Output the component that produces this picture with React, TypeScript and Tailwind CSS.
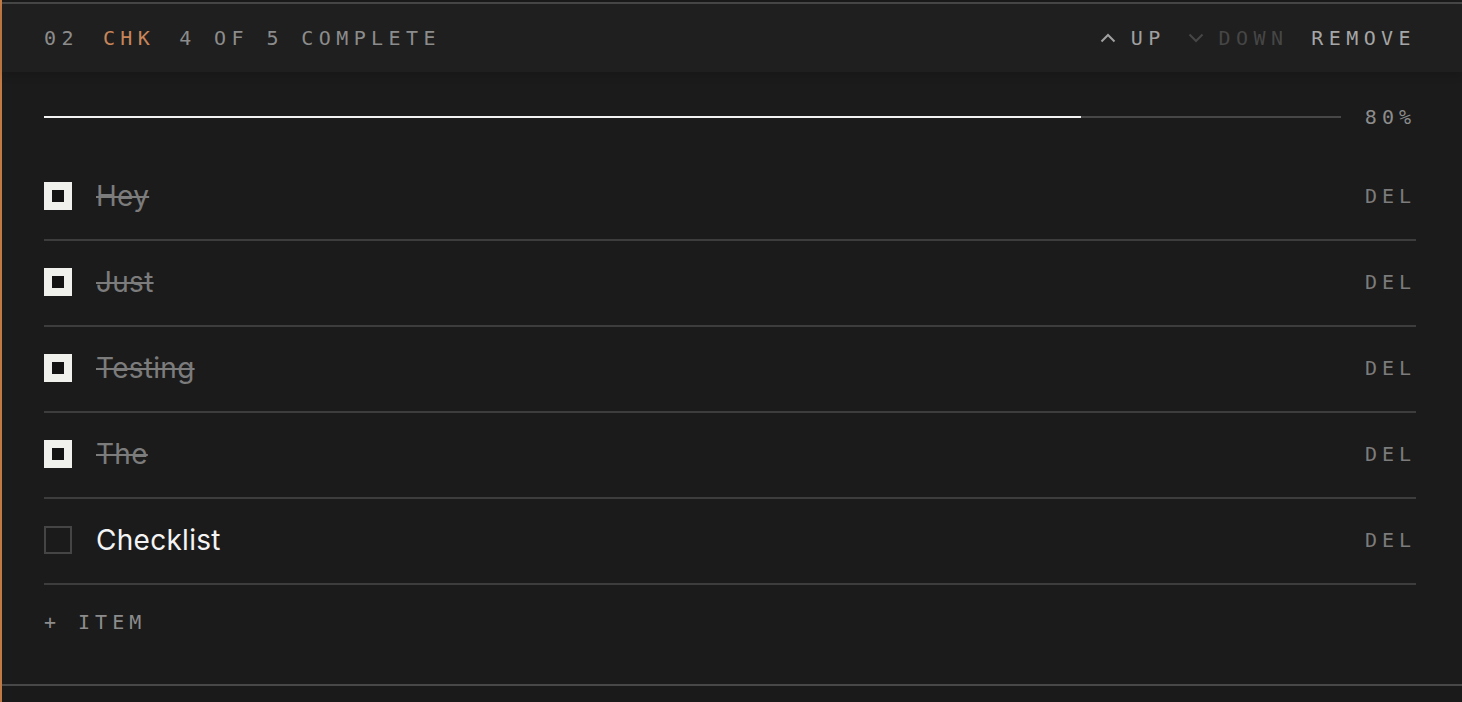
import { useState } from 'react'

type Item = { id: number; text: string; done: boolean }

const initial: Item[] = [
  { id: 1, text: 'Hey', done: true },
  { id: 2, text: 'Just', done: true },
  { id: 3, text: 'Testing', done: true },
  { id: 4, text: 'The', done: true },
  { id: 5, text: 'Checklist', done: false },
]

const mono = "font-['DejaVu_Sans_Mono','Liberation_Mono',monospace]"

function Chevron({ up }: { up?: boolean }) {
  return (
    <svg width="16" height="10" viewBox="0 0 16 10" fill="none" className="mr-[15px]">
      <polyline
        points={up ? '1.5,8.5 8,2 14.5,8.5' : '1.5,1.5 8,8 14.5,1.5'}
        stroke="currentColor"
        strokeWidth="2"
      />
    </svg>
  )
}

export default function App() {
  const [items, setItems] = useState(initial)
  const done = items.filter((i) => i.done).length
  const pct = Math.round((done / items.length) * 100)

  return (
    <div className="min-h-screen border-l-2 border-[#c27a45] bg-[#1a1a1a] pt-[2px]">
      <section className="border-t-2 border-b-2 border-t-[#474747] border-b-[#484848] bg-[#1b1b1b]">
        {/* header */}
        <div className={`flex h-[68px] items-center justify-between bg-[#1f1f1f] pl-[42px] pr-[46px] text-[20px] uppercase tracking-[0.27em] shadow-[0_4px_8px_rgba(0,0,0,0.12)] ${mono}`}>
          <div className="flex items-center gap-[24px] text-[#8c8c8c]">
            <span>02</span>
            <span className="text-[#c8855a]">CHK</span>
            <span>
              {done} of {items.length} complete
            </span>
          </div>
          <div className="flex items-center">
            <button className="flex items-center text-[#a0a0a0]">
              <Chevron up />
              UP
            </button>
            <button className="ml-[22px] flex items-center text-[#464646]">
              <Chevron />
              DOWN
            </button>
            <button className="ml-[23px] text-[#a6a6a6]">REMOVE</button>
          </div>
        </div>

        <div className="pl-[42px] pr-[46px]">
          {/* progress */}
          <div className="mt-[35px] flex h-[20px] items-center gap-[24px]">
            <div className="relative h-[2px] flex-1 bg-[#474747]">
              <div className="absolute inset-y-0 left-0 bg-[#f2f2f2]" style={{ width: `${pct}%` }} />
            </div>
            <span className={`text-[20px] tracking-[0.25em] text-[#8c8c8c] ${mono}`}>{pct}%</span>
          </div>

          {/* items */}
          <ul className="mt-[28px]">
            {items.map((it) => (
              <li key={it.id} className="flex h-[86px] items-center border-b-2 border-[#3d3d3d] pb-[2px]">
                <button
                  onClick={() => setItems((xs) => xs.map((x) => (x.id === it.id ? { ...x, done: !x.done } : x)))}
                  className={`flex h-[28px] w-[28px] shrink-0 items-center justify-center ${it.done ? 'bg-[#f0f0ec]' : 'border-2 border-[#454545]'}`}
                >
                  {it.done && <span className="h-[12px] w-[12px] bg-[#141414]" />}
                </button>
                <span
                  className={`ml-[24px] flex-1 text-[28px] tracking-[0.01em] font-['Inter','Noto_Sans',sans-serif] ${it.done ? 'text-[#7c7c7c] line-through decoration-[#7c7c7c] decoration-2' : 'text-[#f4f4f4]'}`}
                >
                  {it.text}
                </span>
                <button
                  onClick={() => setItems((xs) => xs.filter((x) => x.id !== it.id))}
                  className={`text-[20px] tracking-[0.25em] text-[#7c7c7c] ${mono}`}
                >
                  DEL
                </button>
              </li>
            ))}
          </ul>

          {/* add */}
          <div className="flex h-[74px] items-center">
            <button className={`text-[20px] tracking-[0.25em] text-[#8c8c8c] ${mono}`}>+ ITEM</button>
          </div>
          <div className="h-[25px]" />
        </div>
      </section>
    </div>
  )
}
